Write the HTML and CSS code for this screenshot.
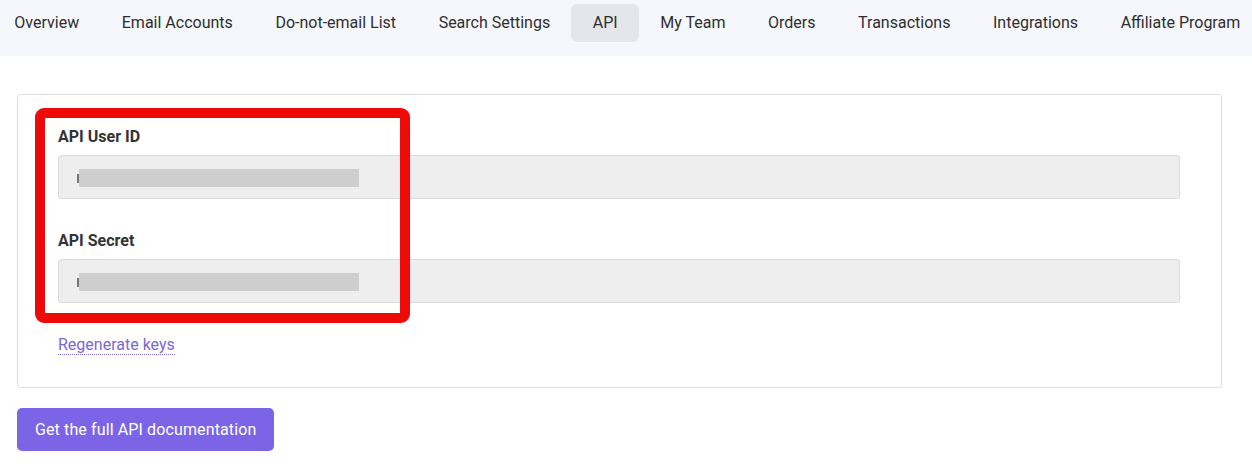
FILE: index.html
```html
<!DOCTYPE html>
<html lang="en">
<head>
  <meta charset="UTF-8">
  <meta name="viewport" content="width=device-width, initial-scale=1.0">
  <title>API Settings</title>
  <link rel="stylesheet" href="styles.css">
</head>
<body>
  <nav class="tabs-bar">
    <ul class="tabs">
      <li class="tab">Overview</li>
      <li class="tab">Email Accounts</li>
      <li class="tab">Do-not-email List</li>
      <li class="tab">Search Settings</li>
      <li class="tab active">API</li>
      <li class="tab">My Team</li>
      <li class="tab">Orders</li>
      <li class="tab">Transactions</li>
      <li class="tab">Integrations</li>
      <li class="tab">Affiliate Program</li>
    </ul>
  </nav>

  <main class="content">
    <div class="card">
      <div class="highlight"></div>

      <label class="field-label">API User ID</label>
      <div class="field-value"><span class="masked"></span></div>

      <label class="field-label">API Secret</label>
      <div class="field-value"><span class="masked"></span></div>

      <a class="regen-link" href="#">Regenerate keys</a>
    </div>

    <button class="docs-button">Get the full API documentation</button>
  </main>
</body>
</html>
```

FILE: styles.css
```css
body {
  margin: 0;
  font-family: Roboto, "Liberation Sans", sans-serif;
  font-size: 16px;
  color: #333;
  background: #fff;
}

.tabs-bar {
  background-color: #f6f7fc;
  height: 56px;
  padding-top: 4px;
  box-sizing: border-box;
  overflow: hidden;
}

.tabs {
  display: flex;
  list-style: none;
  margin: 0 0 0 -7px;
  padding: 0;
  white-space: nowrap;
}

.tab {
  padding: 0 21.3px;
  height: 38px;
  line-height: 38px;
  border-radius: 6px;
  color: #2e2e2e;
  cursor: pointer;
}

.tab.active {
  background-color: #e4e6eb;
}

.content {
  padding: 38px 30px 20px 17px;
}

.card {
  position: relative;
  border: 1px solid #dedede;
  border-radius: 3px;
  padding: 32px 41px 32px 40px;
}

/* red outline drawn around the key fields */
.highlight {
  position: absolute;
  left: 17px;
  top: 13px;
  width: 375px;
  height: 215px;
  box-sizing: border-box;
  border: 10px solid #ef0a0a;
  border-radius: 9px;
  pointer-events: none;
}

.field-label {
  display: block;
  font-weight: 700;
  line-height: 19px;
  color: #333;
  margin-bottom: 9px;
}

.field-value {
  height: 44px;
  box-sizing: border-box;
  background-color: #eeeeee;
  border: 1px solid #dcdcdc;
  border-radius: 3px;
  padding: 13px 20px 0 18px;
  margin-bottom: 32px;
}

.masked {
  position: relative;
  display: block;
  width: 280px;
  height: 18px;
  margin-left: 2px;
  background-color: #cecece;
  filter: blur(0.6px);
}

/* first character peeking out from behind the blur */
.masked::before {
  content: "";
  position: absolute;
  left: -2px;
  top: 5px;
  width: 2px;
  height: 9px;
  background-color: #777;
}

.regen-link {
  display: inline-block;
  color: #7a67d8;
  text-decoration: none;
  line-height: 18px;
  border-bottom: 1px dotted #7a67d8;
}

.docs-button {
  margin-top: 20px;
  height: 43px;
  padding: 0 18px;
  border: none;
  border-radius: 5px;
  background-color: #7b64e6;
  color: #fff;
  font-family: inherit;
  font-size: 16px;
  letter-spacing: 0.12px;
  cursor: pointer;
}
```
